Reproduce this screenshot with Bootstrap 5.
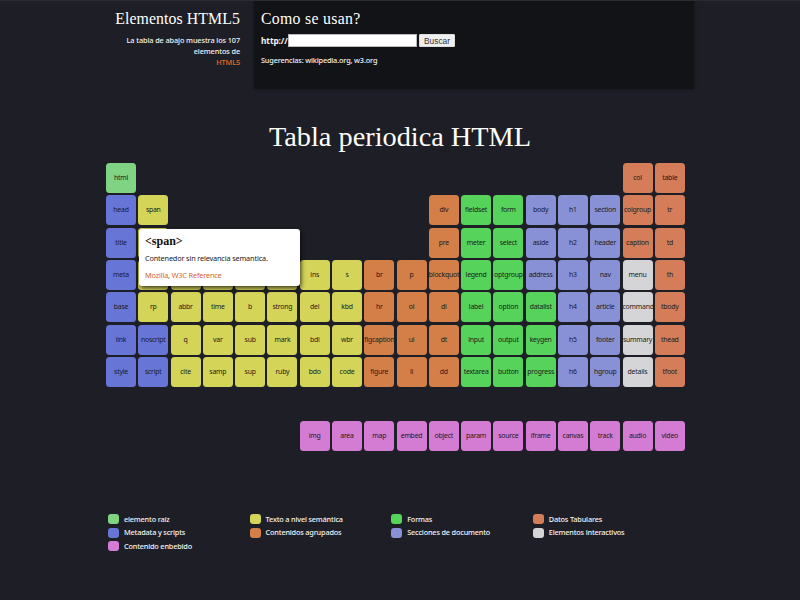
<!DOCTYPE html>
<html lang="es">
<head>
<meta charset="utf-8">
<meta name="viewport" content="width=device-width, initial-scale=1">
<title>Tabla periodica HTML</title>
<link href="https://cdn.jsdelivr.net/npm/bootstrap@5.3.0/dist/css/bootstrap.min.css" rel="stylesheet">
<style>
  body { background: #1e1f26; color: #f4f4f4; font: 500 7.3px/11px Tahoma, "Noto Sans", "Open Sans", sans-serif; letter-spacing: -.15px; width: 800px; height: 600px; border-top: 1px solid #2b2c33; }
  h1, h2, h3 { font-family: "Palatino Linotype", Palatino, "Liberation Serif", serif; font-weight: 400; color: #fff; margin: 0; letter-spacing: 0; }
  h2 { font-size: 15.8px; line-height: 20px; letter-spacing: .1px; }
  .usage h2 { letter-spacing: .3px; }
  h1 { font-size: 28.3px; line-height: 36px; padding-top: 30px; height: 74px; }
  .top-bar { height: 88px; padding-left: 106px; }
  .intro { width: 134px; padding-top: 8px; margin-right: 14px; }
  .intro p { margin-top: 6px; letter-spacing: -.1px; }
  .usage { width: 440px; background: #121316; padding: 8px 7px; box-shadow: 0 0 3px #121316; }
  .orange { color: #f26a21; }
  .url-row { height: 13px; margin-top: 5px; }
  .url-row label { font-size: 8.4px; font-weight: 700; width: 27px; white-space: nowrap; letter-spacing: -.1px; }
  .url-row input { width: 129px; height: 13px; border: 1px solid #bbb; border-radius: 0; padding: 0; background: #fff; }
  .url-row button { width: 36px; height: 13px; margin-left: 2px; padding: 0; border: 1px solid #ddd; border-radius: 1px; background: #efefef; color: #333; font: 8.4px/10px "Liberation Sans", sans-serif; }
  .elements { display: grid; grid-template-columns: repeat(18, 30px); grid-auto-rows: 30px; gap: 2.29px; width: 579px; margin-left: 106px; padding-top: .2px; }
  .tile { border-radius: 3.5px; color: #1c1c1c; font-size: 6.9px; font-weight: 400; line-height: 30px; overflow: hidden; white-space: nowrap; letter-spacing: -.22px; }
  .c-root { background: #80d383; } .c-meta { background: #6675d6; } .c-text { background: #d4d459; }
  .c-group { background: #d47e48; } .c-form { background: #56d35a; } .c-doc { background: #8890d6; }
  .c-data { background: #d47d58; } .c-inter { background: #d5d5d7; } .c-embed { background: #d47bd4; }
  .tip { left: 139px; top: 228px; width: 161px; height: 57px; padding: 5px 6px; background: #fff; color: #222; border-radius: 3px; box-shadow: 1px 2px 5px rgba(0,0,0,.75); font-weight: 400; }
  .tip h3 { font-size: 12px; line-height: 14px; font-weight: 700; color: #111; margin-bottom: 5px; }
  .tip-text { margin-bottom: 5.5px; }
  .tip .orange { color: #d76432; }
  .legend-grid { display: grid; grid-template-columns: repeat(4, 141.6px); grid-auto-rows: 13.5px; margin: 61px 0 0 108px; letter-spacing: -.17px; }
  .swatch { width: 11px; height: 10px; border-radius: 3px; margin-right: 5px; }
</style>
</head>
<body class="position-relative overflow-hidden">
<header class="top-bar d-flex">
  <section class="intro text-end">
    <h2>Elementos HTML5</h2>
    <p class="mb-0">La tabla de abajo muestra los 107<br>elementos de<br><span class="orange">HTML5</span></p>
  </section>
  <section class="usage">
    <h2>Como se usan?</h2>
    <form class="url-row d-flex align-items-center">
      <label for="url">http://</label><input id="url" type="text"><button type="button">Buscar</button>
    </form>
    <p class="mb-0 mt-2">Sugerencias: wikipedia.org, w3.org</p>
  </section>
</header>
<main>
  <h1 class="text-center">Tabla periodica HTML</h1>
  <div class="elements" id="elements"></div>
  <div class="legend-grid">
    <div class="d-flex align-items-center"><span class="swatch c-root"></span>elemento raíz</div>
    <div class="d-flex align-items-center"><span class="swatch c-text"></span>Texto a nivel semántica</div>
    <div class="d-flex align-items-center"><span class="swatch c-form"></span>Formas</div>
    <div class="d-flex align-items-center"><span class="swatch c-data"></span>Datos Tabulares</div>
    <div class="d-flex align-items-center"><span class="swatch c-meta"></span>Metadata y scripts</div>
    <div class="d-flex align-items-center"><span class="swatch c-group"></span>Contenidos agrupados</div>
    <div class="d-flex align-items-center"><span class="swatch c-doc"></span>Secciones de documento</div>
    <div class="d-flex align-items-center"><span class="swatch c-inter"></span>Elementos interactivos</div>
    <div class="d-flex align-items-center"><span class="swatch c-embed"></span>Contenido enbebido</div>
  </div>
</main>
<aside class="tip position-absolute">
  <h3>&lt;span&gt;</h3>
  <p class="tip-text">Contenedor sin relevancia semantica.</p>
  <p class="mb-0"><span class="orange">Mozilla</span>, <span class="orange">W3C Reference</span></p>
</aside>
<script src="https://cdn.jsdelivr.net/npm/bootstrap@5.3.0/dist/js/bootstrap.bundle.min.js"></script>
<script>
  // Each entry: first grid row, first grid column, colour group, names going down one column.
  // A "-" is a tile with no label, as it lies under the open tip.
  const columns = [
    [1, 1, 'root', 'html'], [2, 1, 'meta', 'head title meta base link style'],
    [2, 2, 'text', 'span - - rp'], [6, 2, 'meta', 'noscript script'],
    [4, 3, 'text', '- abbr q cite'], [4, 4, 'text', '- time var samp'],
    [4, 5, 'text', '- b sub sup'], [4, 6, 'text', '- strong mark ruby'],
    [4, 7, 'text', 'ins del bdi bdo'], [4, 8, 'text', 's kbd wbr code'],
    [4, 9, 'group', 'br hr figcaption figure'], [4, 10, 'group', 'p ol ul li'],
    [2, 11, 'group', 'div pre blockquote dl dt dd'],
    [2, 12, 'form', 'fieldset meter legend label input textarea'],
    [2, 13, 'form', 'form select optgroup option output button'],
    [2, 14, 'doc', 'body aside address'], [5, 14, 'form', 'datalist keygen progress'],
    [2, 15, 'doc', 'h1 h2 h3 h4 h5 h6'], [2, 16, 'doc', 'section header nav article footer hgroup'],
    [1, 17, 'data', 'col colgroup caption'], [4, 17, 'inter', 'menu command summary details'],
    [1, 18, 'data', 'table tr td th tbody thead tfoot']
  ];
  'img area map embed object param source iframe canvas track audio video'.split(' ')
    .forEach((name, i) => columns.push([9, 7 + i, 'embed', name]));
  const grid = document.getElementById('elements');
  for (const [row, col, group, names] of columns) {
    names.split(' ').forEach((name, i) => {
      const tile = document.createElement('div');
      tile.className = 'tile text-center c-' + group;
      tile.textContent = name === '-' ? '' : name;
      tile.style.gridArea = (row + i) + ' / ' + col;
      grid.append(tile);
    });
  }
</script>
</body>
</html>
